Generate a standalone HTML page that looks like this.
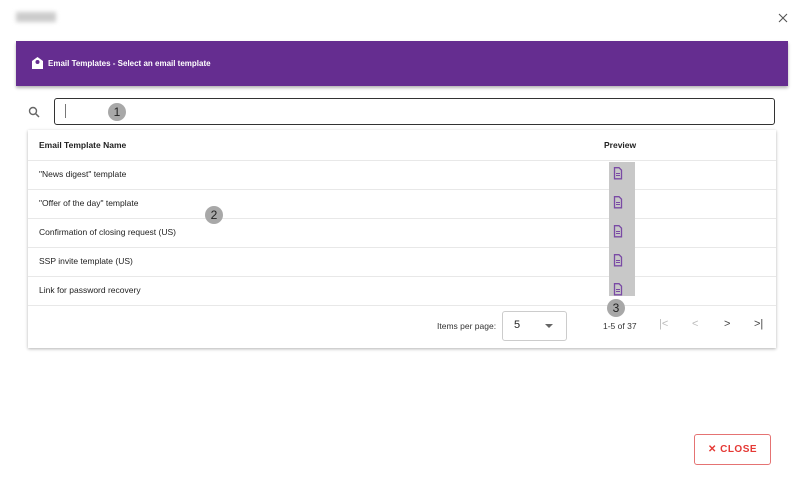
<!DOCTYPE html>
<html><head><style>
body{margin:0;width:800px;height:488px;background:#fff;font-family:"Liberation Sans",sans-serif;position:relative;overflow:hidden}
.abs{position:absolute}
.row{position:absolute;left:28px;width:748px;height:29px;border-bottom:1px solid #e8e8e8;font-size:8.5px;color:#222}
.row span{position:absolute;left:11px;top:9px}
.badge{position:absolute;width:18px;height:18px;border-radius:50%;background:#a8a8a8;color:#222;font-size:12px;text-align:center;line-height:18px}
</style></head><body>
<div class="abs" style="left:16px;top:12px;width:40px;height:10px;background:#ccc;filter:blur(2px)"></div>
<svg class="abs" style="left:778px;top:13px" width="10" height="10" viewBox="0 0 10 10"><path d="M1 1L9 9M9 1L1 9" stroke="#555" stroke-width="1.1"/></svg>
<div class="abs" style="left:16px;top:41px;width:772px;height:45px;background:#652d90;box-shadow:0 2px 3px rgba(0,0,0,.3)"></div>
<svg class="abs" style="left:31px;top:57px" width="13" height="12" viewBox="0 0 13 12"><path d="M1 4 L6.5 0 L12 4 V12 H1 Z" fill="#fff"/><circle cx="6.5" cy="5" r="2" fill="#652d90"/></svg>
<div class="abs" style="left:48px;top:59px;font-size:8px;font-weight:bold;color:#fff">Email Templates - Select an email template</div>
<svg class="abs" style="left:28px;top:106px" width="12" height="12" viewBox="0 0 12 12"><circle cx="5" cy="5" r="3.5" fill="none" stroke="#666" stroke-width="1.4"/><path d="M7.5 7.5 L11 11" stroke="#666" stroke-width="1.5"/></svg>
<div class="abs" style="left:54px;top:98px;width:719px;height:25px;border:1.5px solid #333;border-radius:3px"></div>
<div class="abs" style="left:65px;top:104px;width:1px;height:14px;background:#777"></div>
<div class="badge" style="left:108px;top:103px">1</div>
<div class="abs" style="left:28px;top:130px;width:748px;height:218px;box-shadow:0 1px 3px rgba(0,0,0,.3);background:#fff"></div>
<div class="row" style="top:130px;height:30px;font-weight:bold"><span style="top:10px">Email Template Name</span><span style="left:576px;top:10px">Preview</span></div>
<div class="row" style="top:160px"><span>"News digest" template</span></div>
<div class="row" style="top:189px"><span>"Offer of the day" template</span></div>
<div class="row" style="top:218px"><span>Confirmation of closing request (US)</span></div>
<div class="row" style="top:247px"><span>SSP invite template (US)</span></div>
<div class="row" style="top:276px"><span>Link for password recovery</span></div>
<div class="abs" style="left:609px;top:162px;width:26px;height:134px;background:#c8c8c8"></div>
<svg class="abs" style="left:613px;top:167px" width="10" height="130" viewBox="0 0 10 130">
<g fill="none" stroke="#7a4aa5" stroke-width="1.3"><path d="M1.5 .7h4.5l2.5 2.5v8.6h-7z"/><path transform="translate(0,29)" d="M1.5 .7h4.5l2.5 2.5v8.6h-7z"/><path transform="translate(0,58)" d="M1.5 .7h4.5l2.5 2.5v8.6h-7z"/><path transform="translate(0,87)" d="M1.5 .7h4.5l2.5 2.5v8.6h-7z"/><path transform="translate(0,116)" d="M1.5 .7h4.5l2.5 2.5v8.6h-7z"/></g>
<g fill="#7a4aa5"><rect x="3" y="6" width="4" height="1"/><rect x="3" y="8" width="4" height="1"/><rect x="3" y="35" width="4" height="1"/><rect x="3" y="37" width="4" height="1"/><rect x="3" y="64" width="4" height="1"/><rect x="3" y="66" width="4" height="1"/><rect x="3" y="93" width="4" height="1"/><rect x="3" y="95" width="4" height="1"/><rect x="3" y="122" width="4" height="1"/><rect x="3" y="124" width="4" height="1"/></g></svg>
<div class="badge" style="left:205px;top:206px">2</div>
<div class="badge" style="left:607px;top:299px">3</div>
<div class="abs" style="left:437px;top:321px;font-size:8.5px;color:#333">Items per page:</div>
<div class="abs" style="left:502px;top:311px;width:63px;height:28px;border:1px solid #ccc;border-radius:3px"></div>
<div class="abs" style="left:514px;top:319px;font-size:11px;color:#222">5</div>
<div class="abs" style="left:545px;top:324px;width:0;height:0;border-left:4px solid transparent;border-right:4px solid transparent;border-top:4px solid #666"></div>
<div class="abs" style="left:603px;top:321px;font-size:8.5px;color:#333">1-5 of 37</div>
<div class="abs" style="left:659px;top:318px;font-size:11px;color:#bbb">|&lt;</div>
<div class="abs" style="left:692px;top:318px;font-size:11px;color:#bbb">&lt;</div>
<div class="abs" style="left:724px;top:318px;font-size:11px;color:#444">&gt;</div>
<div class="abs" style="left:754px;top:318px;font-size:11px;color:#444">&gt;|</div>
<div class="abs" style="left:694px;top:434px;width:75px;height:29px;border:1px solid #e57373;border-radius:3px;color:#e53935;font-size:10px;font-weight:bold;text-align:center;line-height:30px;letter-spacing:.5px">✕ CLOSE</div>
</body></html>
